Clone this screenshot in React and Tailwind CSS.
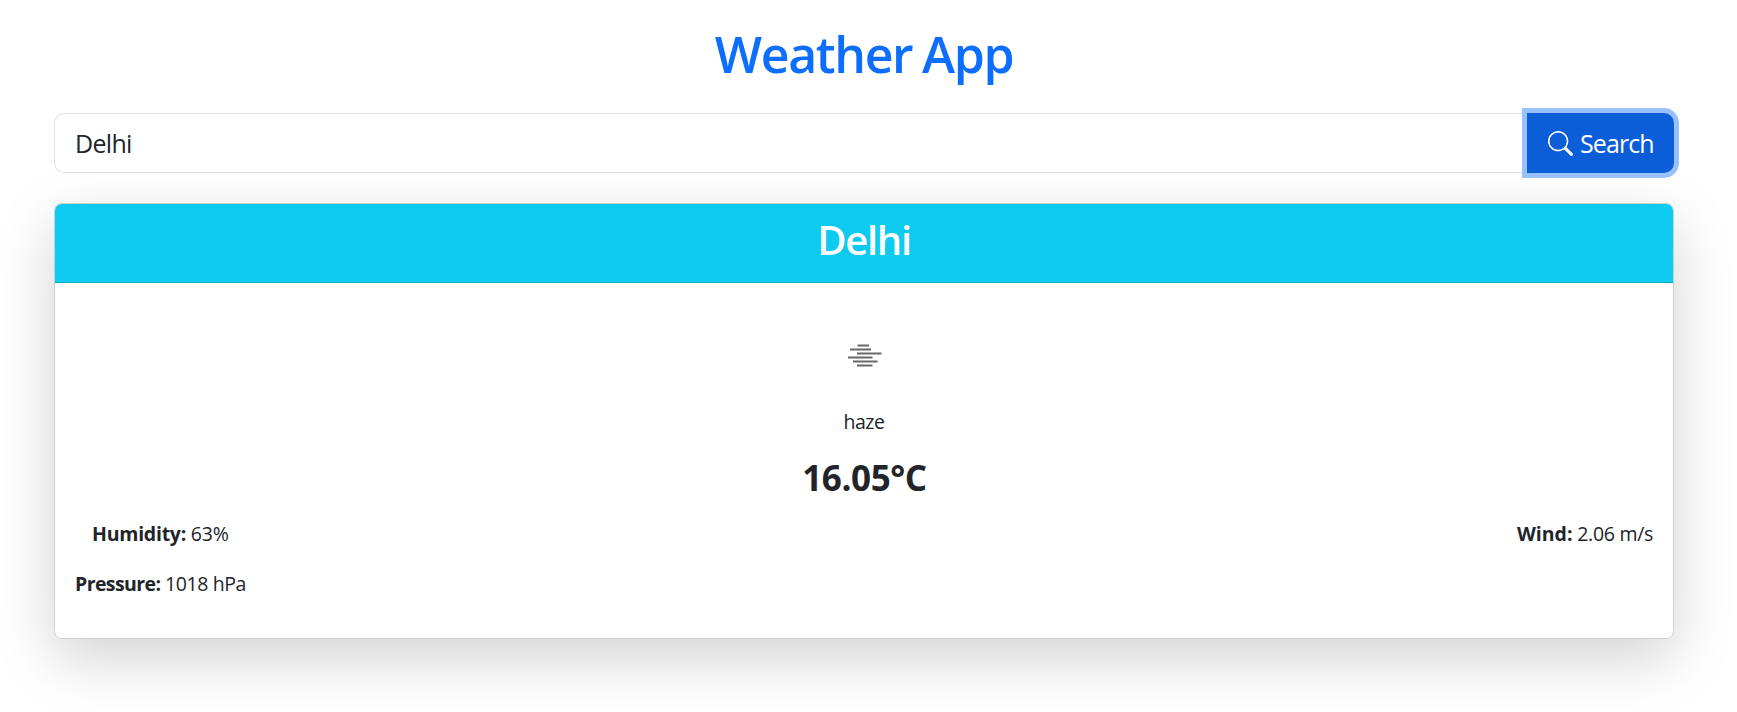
import React from "react";
import { BsSearch } from "react-icons/bs";

function HazeIcon() {
  return (
    <svg width="100" height="100" viewBox="0 0 100 100" className="block" stroke="#686868" strokeWidth="2.2">
      <path d="M43.5 40.5H55M36 44.5H57M43 48.5H67.5M34 52.5H58.5M39 56.5H63.5M43 60.5H58.5" />
    </svg>
  );
}

function Stat({ label, value, labelClass, valueClass }) {
  return (
    <div className="flex whitespace-pre">
      <strong className={`font-bold ${labelClass}`}>{label}</strong>
      <span className={valueClass}>{value}</span>
    </div>
  );
}

export default function App() {
  return (
    <div className="h-[712px] w-full overflow-hidden bg-white font-['Open_Sans','Noto_Sans',sans-serif] text-[#212529]">
      <main className="ml-[54px] w-[1620px] pt-[24px]">
        <h1 className="text-center text-[50px] leading-[60px] font-semibold tracking-[-1.35px] [word-spacing:-2px] text-[#0d6efd]">Weather App</h1>

        <div className="mt-[29px] flex h-[60px]">
          <input
            readOnly
            defaultValue="Delhi"
            className="h-[60px] min-w-0 flex-1 rounded-l-[10px] border border-r-0 border-[#dee2e6] bg-white px-[20px] text-[25px] tracking-[-0.7px] outline-none"
          />
          <button className="relative flex h-[60px] w-[147px] items-center rounded-r-[10px] bg-[#0b5ed7] pl-[21px] text-[25px] text-white shadow-[0_0_0_5px_#98c1fe]">
            <BsSearch className="size-[25px]" />
            <span className="mt-[1px] ml-[7px] tracking-[-0.9px]">Search</span>
          </button>
        </div>

        <section className="mt-[30px] h-[436px] overflow-hidden rounded-[7.5px] border border-[#cfcfcf] bg-white shadow-[0_20px_60px_rgba(0,0,0,0.175)]">
          <header className="h-[79px] border-b border-[#0ba7c6] bg-[#0dcaf0] pt-[11px] text-center">
            <h2 className="text-[40px] leading-[50px] font-semibold tracking-[-1.3px] text-white">Delhi</h2>
          </header>
          <div className="flex flex-col items-center px-[20px] pt-[22px] text-[19.5px] leading-[30px]">
            <HazeIcon />
            <p className="mt-[2px] tracking-[-0.5px]">haze</p>
            <p className="mt-[20px] pl-[1px] text-[35px] leading-[42px] font-bold tracking-[-0.4px]">16.05°C</p>
            <div className="mt-[20px] flex w-full justify-between pl-[17px]">
              <Stat label="Humidity:" value=" 63%" labelClass="tracking-[-0.25px]" valueClass="tracking-[-0.2px]" />
              <Stat label="Wind:" value=" 2.06 m/s" labelClass="" valueClass="tracking-[-0.3px]" />
            </div>
            <div className="mt-[20px] w-full">
              <Stat label="Pressure:" value=" 1018 hPa" labelClass="tracking-[-0.6px]" valueClass="tracking-[-0.4px]" />
            </div>
          </div>
        </section>
      </main>
    </div>
  );
}
